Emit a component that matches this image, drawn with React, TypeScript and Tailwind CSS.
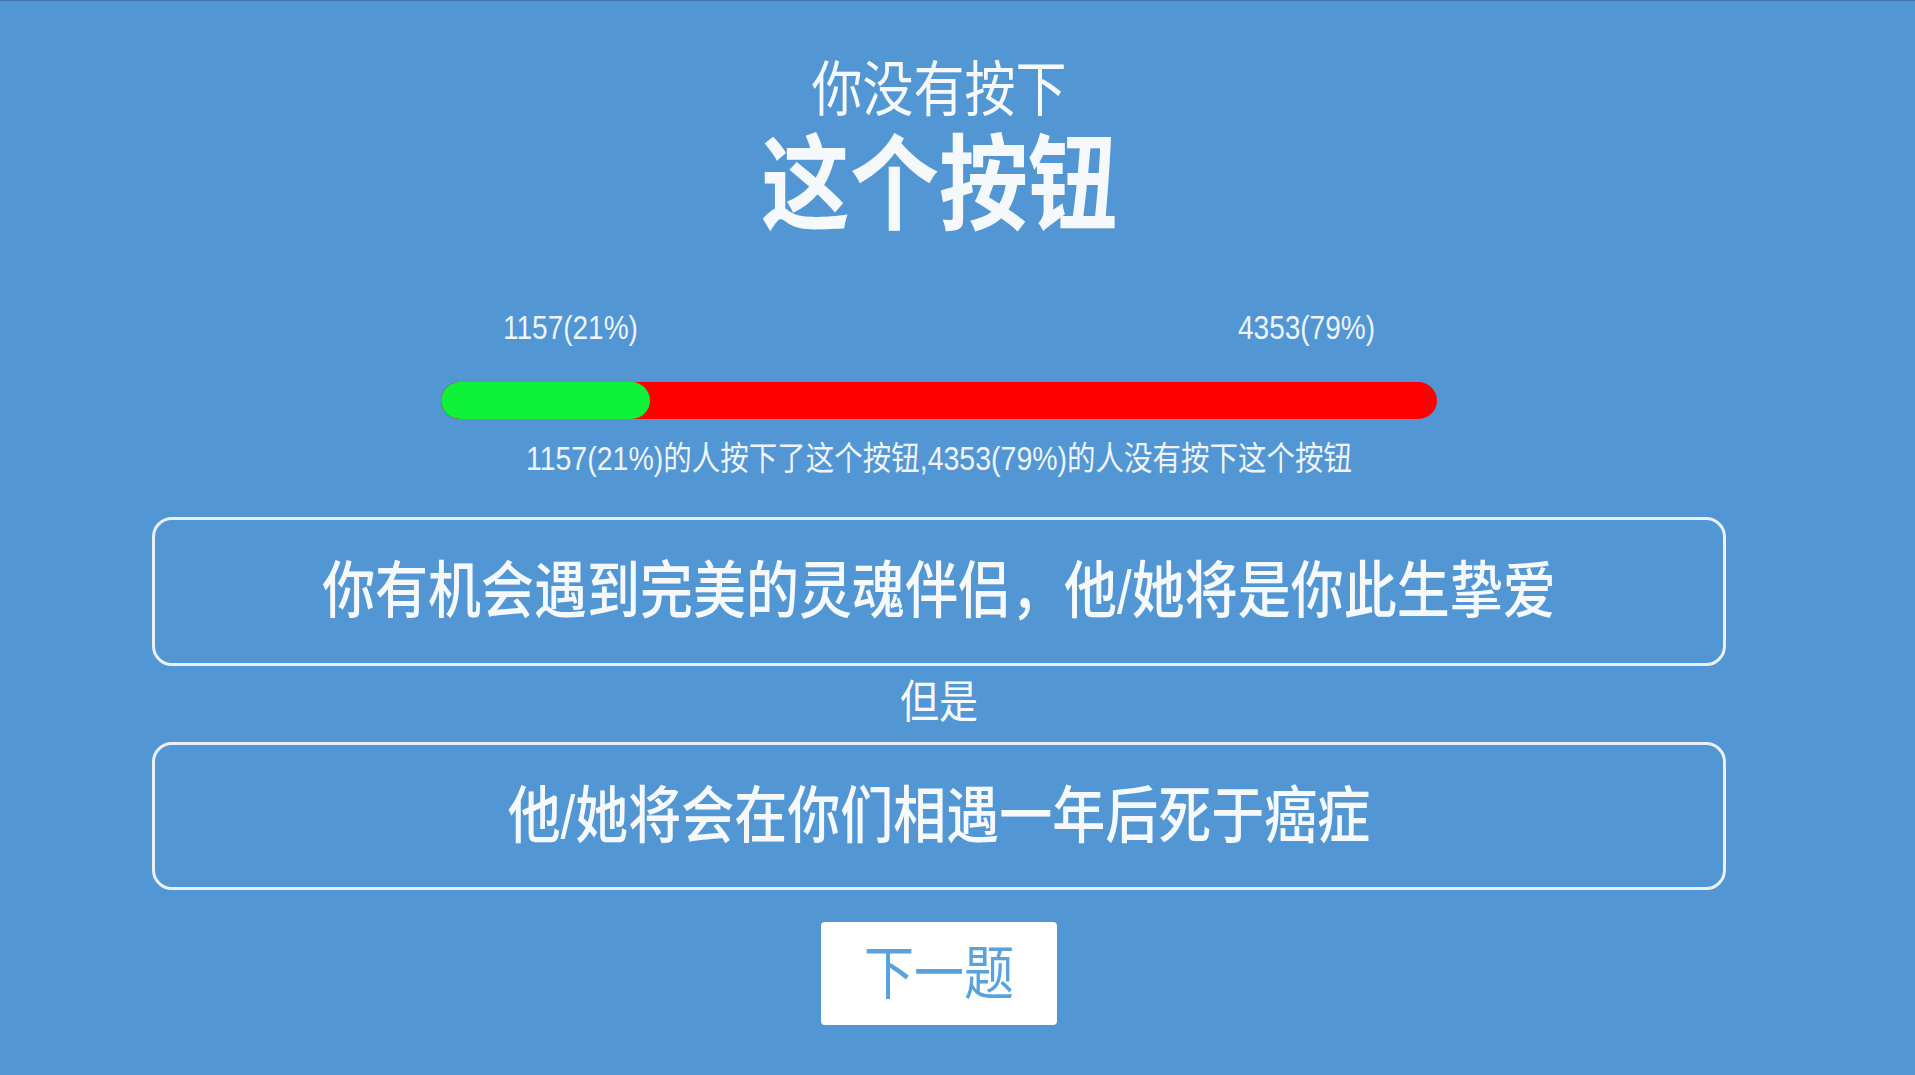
const yes = 1157;
const no = 4353;
const total = yes + no;
const yesPct = Math.round((yes / total) * 100);
const noPct = 100 - yesPct;

const cjk = { fontFamily: '"Liberation Sans", "Noto Sans CJK SC", sans-serif' };

function Tall({ children, className = '' }: { children: React.ReactNode; className?: string }) {
  // glyphs on this screen are drawn a little taller than wide
  return <span className={`inline-block origin-center scale-y-[1.17] ${className}`}>{children}</span>;
}

export default function App() {
  return (
    <div className="h-[1075px] w-full overflow-hidden border-t border-[#3f72a8] bg-[#5296d3] text-[#f6f9fc]" style={cjk}>
      <div className="flex w-[1878px] flex-col items-center">
        {/* heading */}
        <div className="mt-[59px] flex h-[60px] items-center text-[51px] leading-none">
          <Tall>你没有按下</Tall>
        </div>
        <div className="mt-[16px] flex h-[100px] items-center text-[89px] font-bold leading-none">
          <Tall>这个按钮</Tall>
        </div>

        {/* vote counts + bar */}
        <div className="mt-[77px] flex h-[30px] w-[996px] items-center justify-between px-[62px] text-[28px] leading-none text-[#eef4fa]">
          <Tall>
            {yes}({yesPct}%)
          </Tall>
          <Tall>
            {no}({noPct}%)
          </Tall>
        </div>
        <div className="mt-[39px] flex h-[37px] w-[996px] overflow-hidden rounded-full bg-[#ff0000]">
          <div className="h-full rounded-full bg-[#0ef23a]" style={{ width: `${yesPct}%` }} />
        </div>
        <div className="mt-[24px] flex h-[30px] items-center text-[28.5px] leading-none text-[#eef4fa]">
          <Tall>
            {yes}({yesPct}%)的人按下了这个按钮,{no}({noPct}%)的人没有按下这个按钮
          </Tall>
        </div>

        {/* the dilemma */}
        <div className="mt-[44px] flex h-[149px] w-[1574px] items-center justify-center rounded-[20px] border-[3px] border-[#e9f0f8] text-[53px] font-medium leading-none">
          <Tall>你有机会遇到完美的灵魂伴侣，他/她将是你此生挚爱</Tall>
        </div>
        <div className="mt-[16px] flex h-[40px] items-center text-[39px] leading-none">
          <Tall>但是</Tall>
        </div>
        <div className="mt-[20px] flex h-[148px] w-[1574px] items-center justify-center rounded-[20px] border-[3px] border-[#e9f0f8] text-[53px] font-medium leading-none">
          <Tall>他/她将会在你们相遇一年后死于癌症</Tall>
        </div>

        <button className="mt-[32px] flex h-[103px] w-[236px] items-center justify-center rounded-[4px] bg-white text-[50px] leading-none text-[#5aa2dc]">
          <Tall>下一题</Tall>
        </button>
      </div>
    </div>
  );
}
